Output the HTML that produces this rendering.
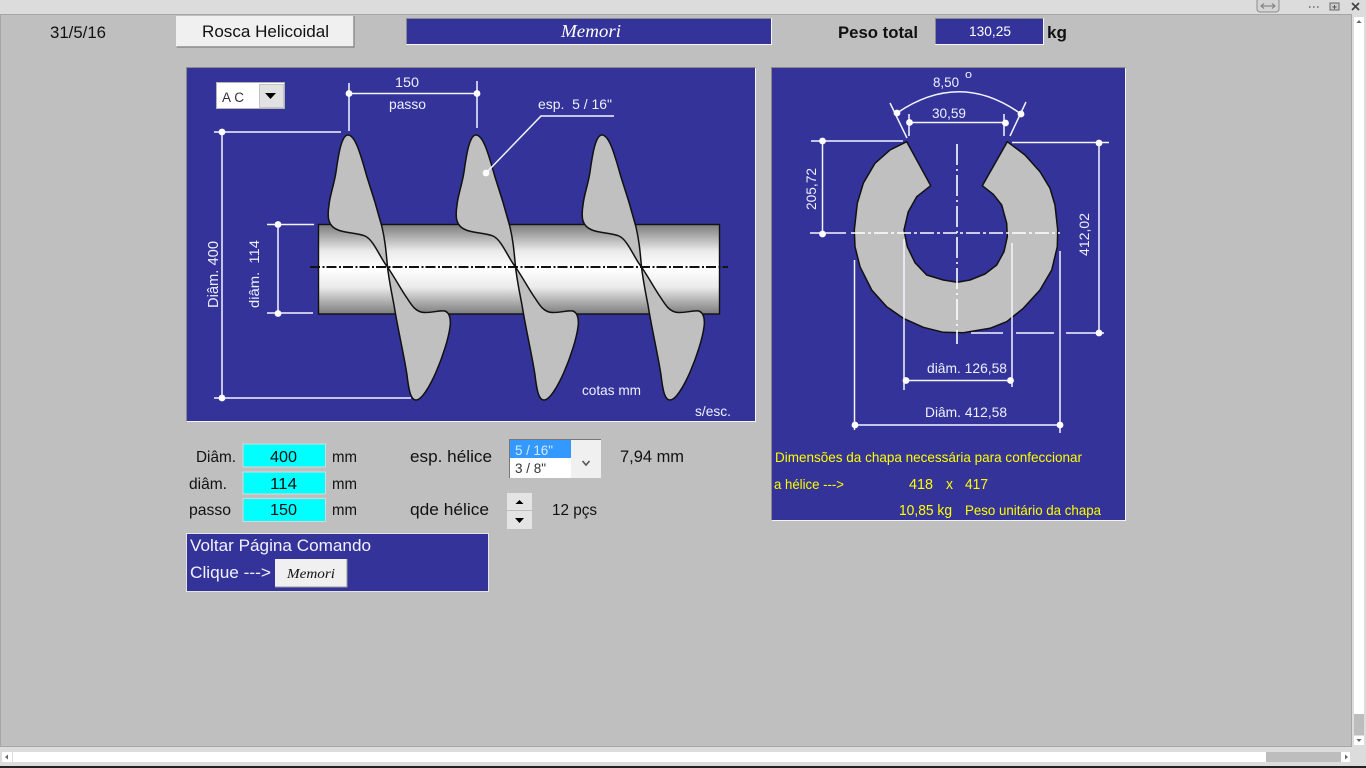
<!DOCTYPE html>
<html><head><meta charset="utf-8"><title>Rosca Helicoidal</title>
<style>
html,body{margin:0;padding:0;width:1366px;height:768px;overflow:hidden;background:#bfbfbf}
svg{display:block;position:absolute;left:0;top:0}
text{font-family:"Liberation Sans",Arial,sans-serif}
.w{fill:#eef0ff;font-size:14px}
.k{fill:#111;font-size:16px}
.y{fill:#ffff00;font-size:14px}
.m{font-family:"Liberation Serif",serif;font-style:italic}
.l{stroke:#f4f4ff;stroke-width:1.5;fill:none}
</style></head><body>
<svg width="1366" height="768" viewBox="0 0 1366 768" xmlns="http://www.w3.org/2000/svg">
<defs>
<linearGradient id="cyl" x1="0" y1="0" x2="0" y2="1">
<stop offset="0" stop-color="#7d7d7d"/><stop offset=".12" stop-color="#a8a8a8"/><stop offset=".3" stop-color="#ebebeb"/><stop offset=".5" stop-color="#ffffff"/><stop offset=".7" stop-color="#ebebeb"/><stop offset=".88" stop-color="#a8a8a8"/><stop offset="1" stop-color="#7d7d7d"/>
</linearGradient>
<g id="blade" fill="#c0c0c0" stroke="#111" stroke-width="1.5" stroke-linejoin="round">
<path d="M348,135 C356,135 362,160 367,177 C373,195 378,212 382,227 C385,240 386,250 387.5,267 C380,258 374,240 365,236 C358,233 345,233 338,230 C328,226 327,218 329,205 C330,195 334,185 336,172 C338,158 341,135 348,135 Z"/>
<path d="M387.5,267 C395,278 402,291 407,298 C412,306 416,312 424,312.5 C432,313 440,310 445,311 C450,313 451,320 450,327 C447,350 427,400 416,400 C411,400 409,392 407,375 C404,355 398,330 394,305 C391,290 389,280 387.5,267 Z"/>
</g>
</defs>

<!-- chrome -->
<rect x="0" y="0" width="1366" height="768" fill="#dcdcdc"/>
<rect x="0" y="15" width="1351" height="732" fill="#bfbfbf"/>
<rect x="0" y="14" width="1352" height="1" fill="#a6a6a6"/>
<rect x="0" y="15" width="1" height="732" fill="#a6a6a6"/>
<rect x="1351" y="14" width="1" height="733" fill="#a6a6a6"/>
<rect x="0" y="746" width="1352" height="1" fill="#a6a6a6"/>
<rect x="1257" y="-2" width="22" height="14" rx="3" fill="#d4d4d4" stroke="#8c8c8c"/>
<path d="M1262,6 h12 M1264,3.5 l-3,2.5 3,2.5 M1272,3.5 l3,2.5 -3,2.5" stroke="#777" fill="none"/>
<path d="M1309,7 h1.5 M1313,7 h1.5 M1317,7 h1.5" stroke="#666" stroke-width="1.5"/>
<rect x="1330" y="3" width="9" height="7" fill="#ccc" stroke="#666"/>
<path d="M1334.5,5 v4 M1332.5,7 h4" stroke="#555"/>
<path d="M1352,3 l7,7 M1359,3 l-7,7" stroke="#444" stroke-width="1.7"/>

<!-- scrollbars -->
<rect x="1354" y="17" width="10" height="10" fill="#fff"/>
<path d="M1356.5,23 h5 l-2.5,-3z" fill="#666"/>
<rect x="1354" y="27" width="10" height="687" fill="#fff"/>
<rect x="1354" y="714" width="10" height="21" fill="#bdbdbd"/>
<rect x="1354" y="736" width="10" height="9" fill="#fff"/>
<path d="M1356.5,739 h5 l-2.5,3z" fill="#666"/>
<rect x="2" y="752" width="10" height="10" fill="#fff"/>
<path d="M8,754.5 v5 l-3,-2.5z" fill="#666"/>
<rect x="13" y="752" width="1253" height="10" fill="#fff"/>
<rect x="1266" y="752" width="75" height="10" fill="#bdbdbd"/>
<rect x="1341" y="752" width="9" height="10" fill="#fff"/>
<path d="M1345,754.5 v5 l3,-2.5z" fill="#666"/>
<rect x="0" y="766" width="1366" height="2" fill="#222"/>

<!-- top row -->
<text x="50" y="38" class="k" style="font-size:17px" textLength="56" lengthAdjust="spacingAndGlyphs">31/5/16</text>
<rect x="176" y="16" width="178" height="31" fill="#f0f0f0"/>
<path d="M176.5,47 H354 V16" fill="none" stroke="#8a8a8a" stroke-width="1.4"/>
<text x="202" y="37" style="font-size:17px" fill="#111" textLength="127" lengthAdjust="spacingAndGlyphs">Rosca Helicoidal</text>

<rect x="406" y="18" width="366" height="27" fill="#333399"/>
<path d="M406.5,45 V18.5 H771.5" fill="none" stroke="#8a8a8a"/>
<path d="M406,44.5 H771.5 V18" fill="none" stroke="#f4f4f4"/>
<text x="561" y="37" class="m" style="font-size:18px" fill="#fff" textLength="60" lengthAdjust="spacingAndGlyphs">Memori</text>

<text x="838" y="38" style="font-size:17px;font-weight:bold" fill="#111" textLength="80" lengthAdjust="spacingAndGlyphs">Peso total</text>
<rect x="935" y="18" width="109" height="27" fill="#333399"/>
<path d="M935.5,45 V18.5 H1043.5" fill="none" stroke="#8a8a8a"/>
<path d="M935,44.5 H1043.5 V18" fill="none" stroke="#f4f4f4"/>
<text x="969" y="36" style="font-size:14px" fill="#fff" textLength="42" lengthAdjust="spacingAndGlyphs">130,25</text>
<text x="1047" y="38" style="font-size:17px;font-weight:bold" fill="#111" textLength="20" lengthAdjust="spacingAndGlyphs">kg</text>

<!-- panel 1 -->
<rect x="187" y="68" width="568.5" height="353.5" fill="#333399"/>
<path d="M186.5,422 V67.5 H755.5" fill="none" stroke="#8a8a8a"/>
<path d="M186.5,421.5 H755.5 V68" fill="none" stroke="#f4f4f4"/>

<rect x="216" y="82" width="69" height="27" fill="#fff"/>
<rect x="216.5" y="82.5" width="68" height="26" fill="none" stroke="#b4b4b4"/>
<rect x="259.5" y="84.5" width="24" height="23" fill="#e1e1e1" stroke="#c4c4c4"/>
<path d="M265,93 h11 l-5.5,6z" fill="#000"/>
<text x="222" y="102" style="font-size:13.5px" fill="#333" textLength="22" lengthAdjust="spacing">A C</text>

<!-- shaft -->
<rect x="318.5" y="224.5" width="401" height="89.5" fill="url(#cyl)" stroke="#111" stroke-width="1.4"/>
<use href="#blade"/>
<use href="#blade" x="128"/>
<use href="#blade" x="254"/>
<path d="M310,267 H728" stroke="#111" stroke-width="2" stroke-dasharray="10 2.5 2 2"/>

<!-- dims panel 1 -->
<g class="l">
<path d="M349,83 V131 M477,81 V128 M349,93.5 H477"/>
<path d="M214,132 H341 M222,132 V398 M214,398 H411"/>
<path d="M267,224.5 H314 M267,313 H313 M278,224.5 V313"/>
<path d="M486,173 L541,116 H614"/>
</g>
<g fill="#fff">
<circle cx="349" cy="93.5" r="3.4"/><circle cx="477" cy="93.5" r="3.4"/>
<circle cx="222" cy="132" r="3.4"/><circle cx="222" cy="398" r="3.4"/>
<circle cx="278" cy="224.5" r="3.4"/><circle cx="278" cy="313.5" r="3.4"/>
<circle cx="486" cy="173" r="3.4"/>
</g>
<text x="395" y="87" class="w" textLength="24" lengthAdjust="spacingAndGlyphs">150</text>
<text x="389" y="109" class="w" textLength="37" lengthAdjust="spacingAndGlyphs">passo</text>
<text x="538" y="109" class="w" textLength="74" lengthAdjust="spacingAndGlyphs">esp.&#160; 5 / 16"</text>
<text class="w" style="font-size:15px" transform="translate(218,308) rotate(-90)" textLength="67" lengthAdjust="spacingAndGlyphs">Diâm. 400</text>
<text class="w" transform="translate(259,308) rotate(-90)" textLength="68" lengthAdjust="spacingAndGlyphs">diâm.&#160; 114</text>
<text x="582" y="395" class="w" textLength="59" lengthAdjust="spacingAndGlyphs">cotas mm</text>
<text x="695" y="416" class="w" textLength="36" lengthAdjust="spacingAndGlyphs">s/esc.</text>

<!-- panel 2 -->
<rect x="772" y="68" width="353.5" height="452.5" fill="#333399"/>
<path d="M771.5,521 V67.5 H1125.5" fill="none" stroke="#8a8a8a"/>
<path d="M771.5,520.5 H1125.5 V68" fill="none" stroke="#f4f4f4"/>

<path d="M906.7,141.7 L890,150 875,163.3 863.3,183.3 857.3,203.3 854.3,230 855,246.7 860,266.7 871.7,290 886.7,306.7 903.3,318.3 923.3,327.3 943.3,332.3 963.3,332.7 990,328.3 1006.7,321.7 1023.3,308.3 1040,290 1051.7,270 1057.3,246.7 1057.7,230 1055,205 1050,188.3 1040,171.7 1025,155 1007.3,141.7 L982.3,185.7 993.3,194.3 1001.7,205 1006.7,223.3 1007.3,236.7 1004,251.7 996.7,265 985,274 970,280 957.3,282.3 943.3,280 926.7,275 915,262.7 907.3,246.7 904,230 908.3,211.7 916.7,196.7 930.7,185.7 Z" fill="#c0c0c0" stroke="#111" stroke-width="1.5" stroke-linejoin="round"/>

<g class="l">
<path d="M897,113 Q960,70 1021,114"/>
<path d="M890,103 L907,138 M1026,102 L1010,136"/>
<path d="M909,114 V136 M1004,114 V136 M909,122.5 H1005"/>
<path d="M811,141 H903 M822.5,141 V234 M810,233 H846"/>
<path d="M1012,142.5 H1109 M1099,142.5 V333"/>
<path d="M971,333 H1003 M1016,333 H1054 M1066,333 H1104"/>
<path d="M854.5,260 V430 M904,239 V390 M1012,243 V387 M1060,251 V433"/>
<path d="M905,380.5 H1011 M855,425 H1060"/>
</g>
<path d="M851,233 H1060" stroke="#fff" stroke-width="1.6" stroke-dasharray="14 3 3 3"/>
<path d="M957,144 V344" stroke="#fff" stroke-width="1.6" stroke-dasharray="21 4 2 4"/>
<g fill="#fff">
<circle cx="897" cy="113" r="3.4"/><circle cx="1021" cy="114" r="3.4"/>
<circle cx="909.5" cy="122.5" r="3.4"/><circle cx="1005.5" cy="123" r="3.4"/>
<circle cx="822.5" cy="141" r="3.4"/><circle cx="822.5" cy="234" r="3.4"/>
<circle cx="1099" cy="143" r="3.4"/><circle cx="1099" cy="333" r="3.4"/>
<circle cx="906" cy="380.5" r="3.4"/><circle cx="1010.5" cy="380.5" r="3.4"/>
<circle cx="855" cy="425" r="3.4"/><circle cx="1060" cy="425" r="3.4"/>
</g>
<text x="933" y="87" class="w" textLength="26" lengthAdjust="spacingAndGlyphs">8,50</text>
<text x="965" y="78" class="w" style="font-size:11px" textLength="7" lengthAdjust="spacingAndGlyphs">o</text>
<text x="932" y="118" class="w" textLength="34" lengthAdjust="spacingAndGlyphs">30,59</text>
<text class="w" transform="translate(816,210) rotate(-90)" textLength="42" lengthAdjust="spacingAndGlyphs">205,72</text>
<text class="w" transform="translate(1089,256) rotate(-90)" textLength="43" lengthAdjust="spacingAndGlyphs">412,02</text>
<text x="927" y="373" class="w" textLength="80" lengthAdjust="spacingAndGlyphs">diâm. 126,58</text>
<text x="925" y="417" class="w" textLength="82" lengthAdjust="spacingAndGlyphs">Diâm. 412,58</text>
<text x="775" y="462" class="y" textLength="307" lengthAdjust="spacingAndGlyphs">Dimensões da chapa necessária para confeccionar</text>
<text x="774" y="489" class="y" textLength="70" lengthAdjust="spacingAndGlyphs">a hélice ---&gt;</text>
<text x="909" y="489" class="y" style="font-size:15px" textLength="24" lengthAdjust="spacingAndGlyphs">418</text>
<text x="946" y="489" class="y" style="font-size:15px" textLength="7" lengthAdjust="spacingAndGlyphs">x</text>
<text x="965" y="489" class="y" style="font-size:15px" textLength="23" lengthAdjust="spacingAndGlyphs">417</text>
<text x="899" y="515" class="y" style="font-size:15px" textLength="53" lengthAdjust="spacingAndGlyphs">10,85 kg</text>
<text x="965" y="515" class="y" textLength="136" lengthAdjust="spacingAndGlyphs">Peso unitário da chapa</text>

<!-- inputs -->
<rect x="243" y="444" width="82.5" height="23" fill="#00ffff" stroke="#d8d8d8"/>
<rect x="243" y="472" width="82.5" height="22" fill="#00ffff" stroke="#d8d8d8"/>
<rect x="243" y="498.5" width="82.5" height="23" fill="#00ffff" stroke="#d8d8d8"/>
<text x="270" y="462" class="k" textLength="27" lengthAdjust="spacingAndGlyphs">400</text>
<text x="270" y="489" class="k" textLength="27" lengthAdjust="spacingAndGlyphs">114</text>
<text x="270" y="515" class="k" textLength="27" lengthAdjust="spacingAndGlyphs">150</text>
<text x="196" y="462" class="k" textLength="40" lengthAdjust="spacingAndGlyphs">Diâm.</text>
<text x="189" y="489" class="k" textLength="38" lengthAdjust="spacingAndGlyphs">diâm.</text>
<text x="189" y="515" class="k" textLength="42" lengthAdjust="spacingAndGlyphs">passo</text>
<text x="332" y="462" class="k" textLength="25" lengthAdjust="spacingAndGlyphs">mm</text>
<text x="332" y="489" class="k" textLength="25" lengthAdjust="spacingAndGlyphs">mm</text>
<text x="332" y="515" class="k" textLength="25" lengthAdjust="spacingAndGlyphs">mm</text>
<text x="410" y="462" class="k" style="font-size:17px" textLength="82" lengthAdjust="spacingAndGlyphs">esp. hélice</text>
<text x="410" y="515" class="k" style="font-size:17px" textLength="79" lengthAdjust="spacingAndGlyphs">qde hélice</text>

<!-- list -->
<rect x="509" y="439" width="92" height="39" fill="#fff"/>
<rect x="510" y="440" width="61" height="18" fill="#3399ff"/>
<path d="M509.5,478 V439.5 H601" fill="none" stroke="#777"/>
<rect x="571" y="440" width="30" height="38" fill="#f0f0f0"/>
<path d="M582.5,461 L586,465 589.5,461" fill="none" stroke="#555" stroke-width="1.6"/>
<text x="515" y="455" style="font-size:13.5px" fill="#d8e8ff" textLength="38" lengthAdjust="spacing">5 / 16"</text>
<text x="515" y="473" style="font-size:13.5px" fill="#333" textLength="31" lengthAdjust="spacing">3 / 8"</text>
<text x="620" y="462" class="k" style="font-size:17px" textLength="64" lengthAdjust="spacingAndGlyphs">7,94 mm</text>

<!-- spinner -->
<rect x="507" y="493" width="25" height="17" fill="#e4e4e4"/>
<rect x="507" y="511" width="25" height="18" fill="#e4e4e4"/>
<path d="M515.5,504 h8 l-4,-4z" fill="#000"/>
<path d="M515,518 h9 l-4.5,5z" fill="#000"/>
<text x="552" y="515" class="k" textLength="45" lengthAdjust="spacingAndGlyphs">12 pçs</text>

<!-- panel 3 -->
<rect x="186" y="533" width="303" height="59" fill="#333399"/>
<rect x="186.5" y="533.5" width="302" height="58" fill="none" stroke="#e4e4e4"/>
<text x="190" y="551" style="font-size:17px" fill="#f2f2ff" textLength="181" lengthAdjust="spacingAndGlyphs">Voltar Página Comando</text>
<text x="190" y="578" style="font-size:17px" fill="#f2f2ff" textLength="81" lengthAdjust="spacingAndGlyphs">Clique ---&gt;</text>
<rect x="275" y="559" width="72" height="28" fill="#f0f0f0"/>
<path d="M275,587 H347 V559" fill="none" stroke="#999"/>
<text x="287" y="578" class="m" style="font-size:14px" fill="#111" textLength="48" lengthAdjust="spacingAndGlyphs">Memori</text>
</svg>
</body></html>
